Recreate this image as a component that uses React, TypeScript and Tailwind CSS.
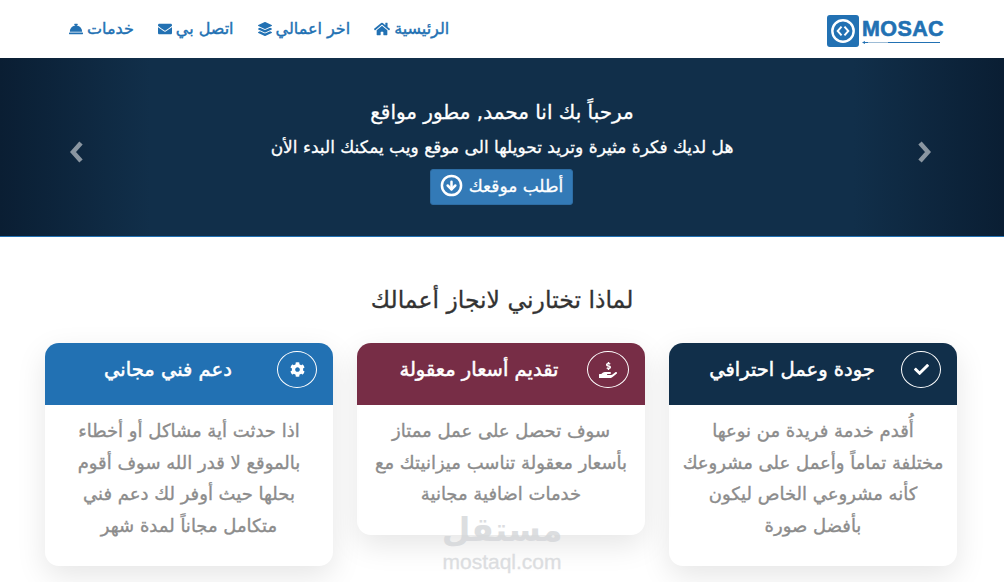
import React from 'react';
import { CircleArrowDown } from 'lucide-react';
import {
  FaCheck,
  FaCog,
  FaConciergeBell,
  FaEnvelope,
  FaHandHoldingUsd,
  FaHome,
  FaLayerGroup,
} from 'react-icons/fa';

const navItems = [
  { label: 'الرئيسية', icon: <FaHome size={16} /> },
  { label: 'اخر اعمالي', icon: <FaLayerGroup size={14} /> },
  { label: 'اتصل بي', icon: <FaEnvelope size={14} /> },
  { label: 'خدمات', icon: <FaConciergeBell size={14} /> },
];

const cards = [
  {
    title: 'جودة وعمل احترافي',
    icon: <FaCheck size={15} />,
    bg: 'bg-[#112f4a]',
    circle: 'w-[40px]',
    lines: ['أُقدم خدمة فريدة من نوعها', 'مختلفة تماماً وأعمل على مشروعك', 'كأنه مشروعي الخاص ليكون', 'بأفضل صورة'],
  },
  {
    title: 'تقديم أسعار معقولة',
    icon: <FaHandHoldingUsd size={18} />,
    bg: 'bg-[#772d46]',
    circle: 'w-[42px]',
    lines: ['سوف تحصل على عمل ممتاز', 'بأسعار معقولة تناسب ميزانيتك مع', 'خدمات اضافية مجانية'],
  },
  {
    title: 'دعم فني مجاني',
    icon: <FaCog size={15} />,
    bg: 'bg-[#2271b3]',
    circle: 'w-[40px]',
    lines: ['اذا حدثت أية مشاكل أو أخطاء', 'بالموقع لا قدر الله سوف أقوم', 'بحلها حيث أوفر لك دعم فني', 'متكامل مجاناً لمدة شهر'],
  },
];

const Logo: React.FC = () => (
  <div className="mt-[3px] flex items-center gap-[3px]" dir="ltr">
    <svg width="32" height="32" viewBox="0 0 33 33">
      <rect width="33" height="33" rx="3" fill="#2271b3" />
      <circle cx="16.5" cy="16.5" r="11" fill="none" stroke="#fff" strokeWidth="2.5" />
      <path d="M15 12l-4 4.5 4 4.5M18 12l4 4.5-4 4.5" fill="none" stroke="#fff" strokeWidth="2" />
    </svg>
    <div className="flex w-[82px] flex-col items-start pt-[3px]">
      <span className="font-['Liberation_Sans',sans-serif] text-[21.5px] leading-[21px] font-bold tracking-[0.4px] text-[#2271b3] [-webkit-text-stroke:0.6px_#2271b3]">MOSAC</span>
      <svg width="80" height="5" viewBox="0 0 80 5">
        <path d="M3 2.5H78" stroke="#2271b3" strokeWidth="1" />
        <path d="M3 1L0 2.5 3 4z" fill="#2271b3" />
        <path d="M6 2.5H26" stroke="#9dbcd6" strokeWidth="1" />
      </svg>
    </div>
  </div>
);

const Chevron: React.FC<{ points: string; className: string }> = ({ points, className }) => (
  <svg width="16" height="22" viewBox="0 0 16 22" className={className}>
    <polyline points={points} fill="none" stroke="#8a96a1" strokeWidth="4.5" />
  </svg>
);

const App: React.FC = () => {
  return (
    <div dir="rtl" className="relative h-[582px] w-[1004px] overflow-hidden bg-white font-['DejaVu_Sans',sans-serif]">
      {/* Header */}
      <header className="flex h-[58px] items-center justify-between pr-[60px] pl-[69px]">
        <Logo />
        <nav className="flex items-center gap-6">
          {navItems.map((item) => (
            <a key={item.label} className="flex items-center gap-[4px] text-[16px] text-[#2271b3] [-webkit-text-stroke:0.4px_#2271b3]">
              <span>{item.label}</span>
              {item.icon}
            </a>
          ))}
        </nav>
      </header>

      {/* Hero */}
      <section className="relative flex h-[179px] flex-col items-center border-b border-[#2271b3] bg-[linear-gradient(to_right,#0a1e33_0%,#112f4a_15%,#112f4a_85%,#0a1e33_100%)] pt-[40px] text-white">
        <h1 className="text-[20px] leading-[28px] [-webkit-text-stroke:0.3px_#fff]">مرحباً بك انا محمد, مطور مواقع</h1>
        <p className="mt-[9px] text-[17px] leading-[24px] [-webkit-text-stroke:0.3px_#fff]">هل لديك فكرة مثيرة وتريد تحويلها الى موقع ويب يمكنك البدء الأن</p>
        <button className="mt-[10px] mr-px flex h-[36px] w-[143px] items-center justify-center gap-1.5 rounded-[3px] border border-[#2e6da4] bg-[#337ab7] text-[17px] [-webkit-text-stroke:0.3px_#fff]">
          <span>أطلب موقعك</span>
          <CircleArrowDown size={23} strokeWidth={2.6} className="-mt-1" />
        </button>
        <Chevron points="13,2 5,11 13,20" className="absolute top-[83px] left-[68px]" />
        <Chevron points="3,2 11,11 3,20" className="absolute top-[83px] left-[917px]" />
      </section>

      {/* Why me */}
      <h2 className="mt-[46px] text-center text-[23.5px] leading-[34px] text-[#333] [-webkit-text-stroke:0.3px_#333]">لماذا تختارني لانجاز أعمالك</h2>

      <div className="mt-[26px] flex items-start justify-center gap-6 pr-[2px]">
        {cards.map((card) => (
          <article key={card.title} className="w-[288px] overflow-hidden rounded-[14px] bg-white pb-[25px] shadow-[0_10px_30px_rgba(0,0,0,0.1)]">
            <div className={`flex h-[62px] items-center pr-[16px] pb-[9px] pl-[14px] text-white ${card.bg}`}>
              <span className={`flex h-[37px] shrink-0 items-center justify-center rounded-[50%] border border-white ${card.circle}`}>
                {card.icon}
              </span>
              <h3 className="flex-1 text-center text-[19.5px] whitespace-nowrap [-webkit-text-stroke:0.5px_#fff]">{card.title}</h3>
            </div>
            <div className="pt-[10px] text-center text-[18px] leading-[31.5px] text-[#8c8c8c] [-webkit-text-stroke:0.35px_#8c8c8c]">
              {card.lines.map((line) => (
                <p key={line}>{line}</p>
              ))}
            </div>
          </article>
        ))}
      </div>

      {/* Watermark */}
      <div className="absolute top-[508px] left-[442px] flex w-[120px] flex-col items-center text-[#d4d6d9] opacity-80">
        <span className="text-[33px] leading-[44px] font-bold">مستقل</span>
        <span dir="ltr" className="font-['Liberation_Sans',sans-serif] text-[21px] leading-[20px] [-webkit-text-stroke:0.3px_#d4d6d9]">mostaql.com</span>
      </div>
    </div>
  );
};

export default App;
